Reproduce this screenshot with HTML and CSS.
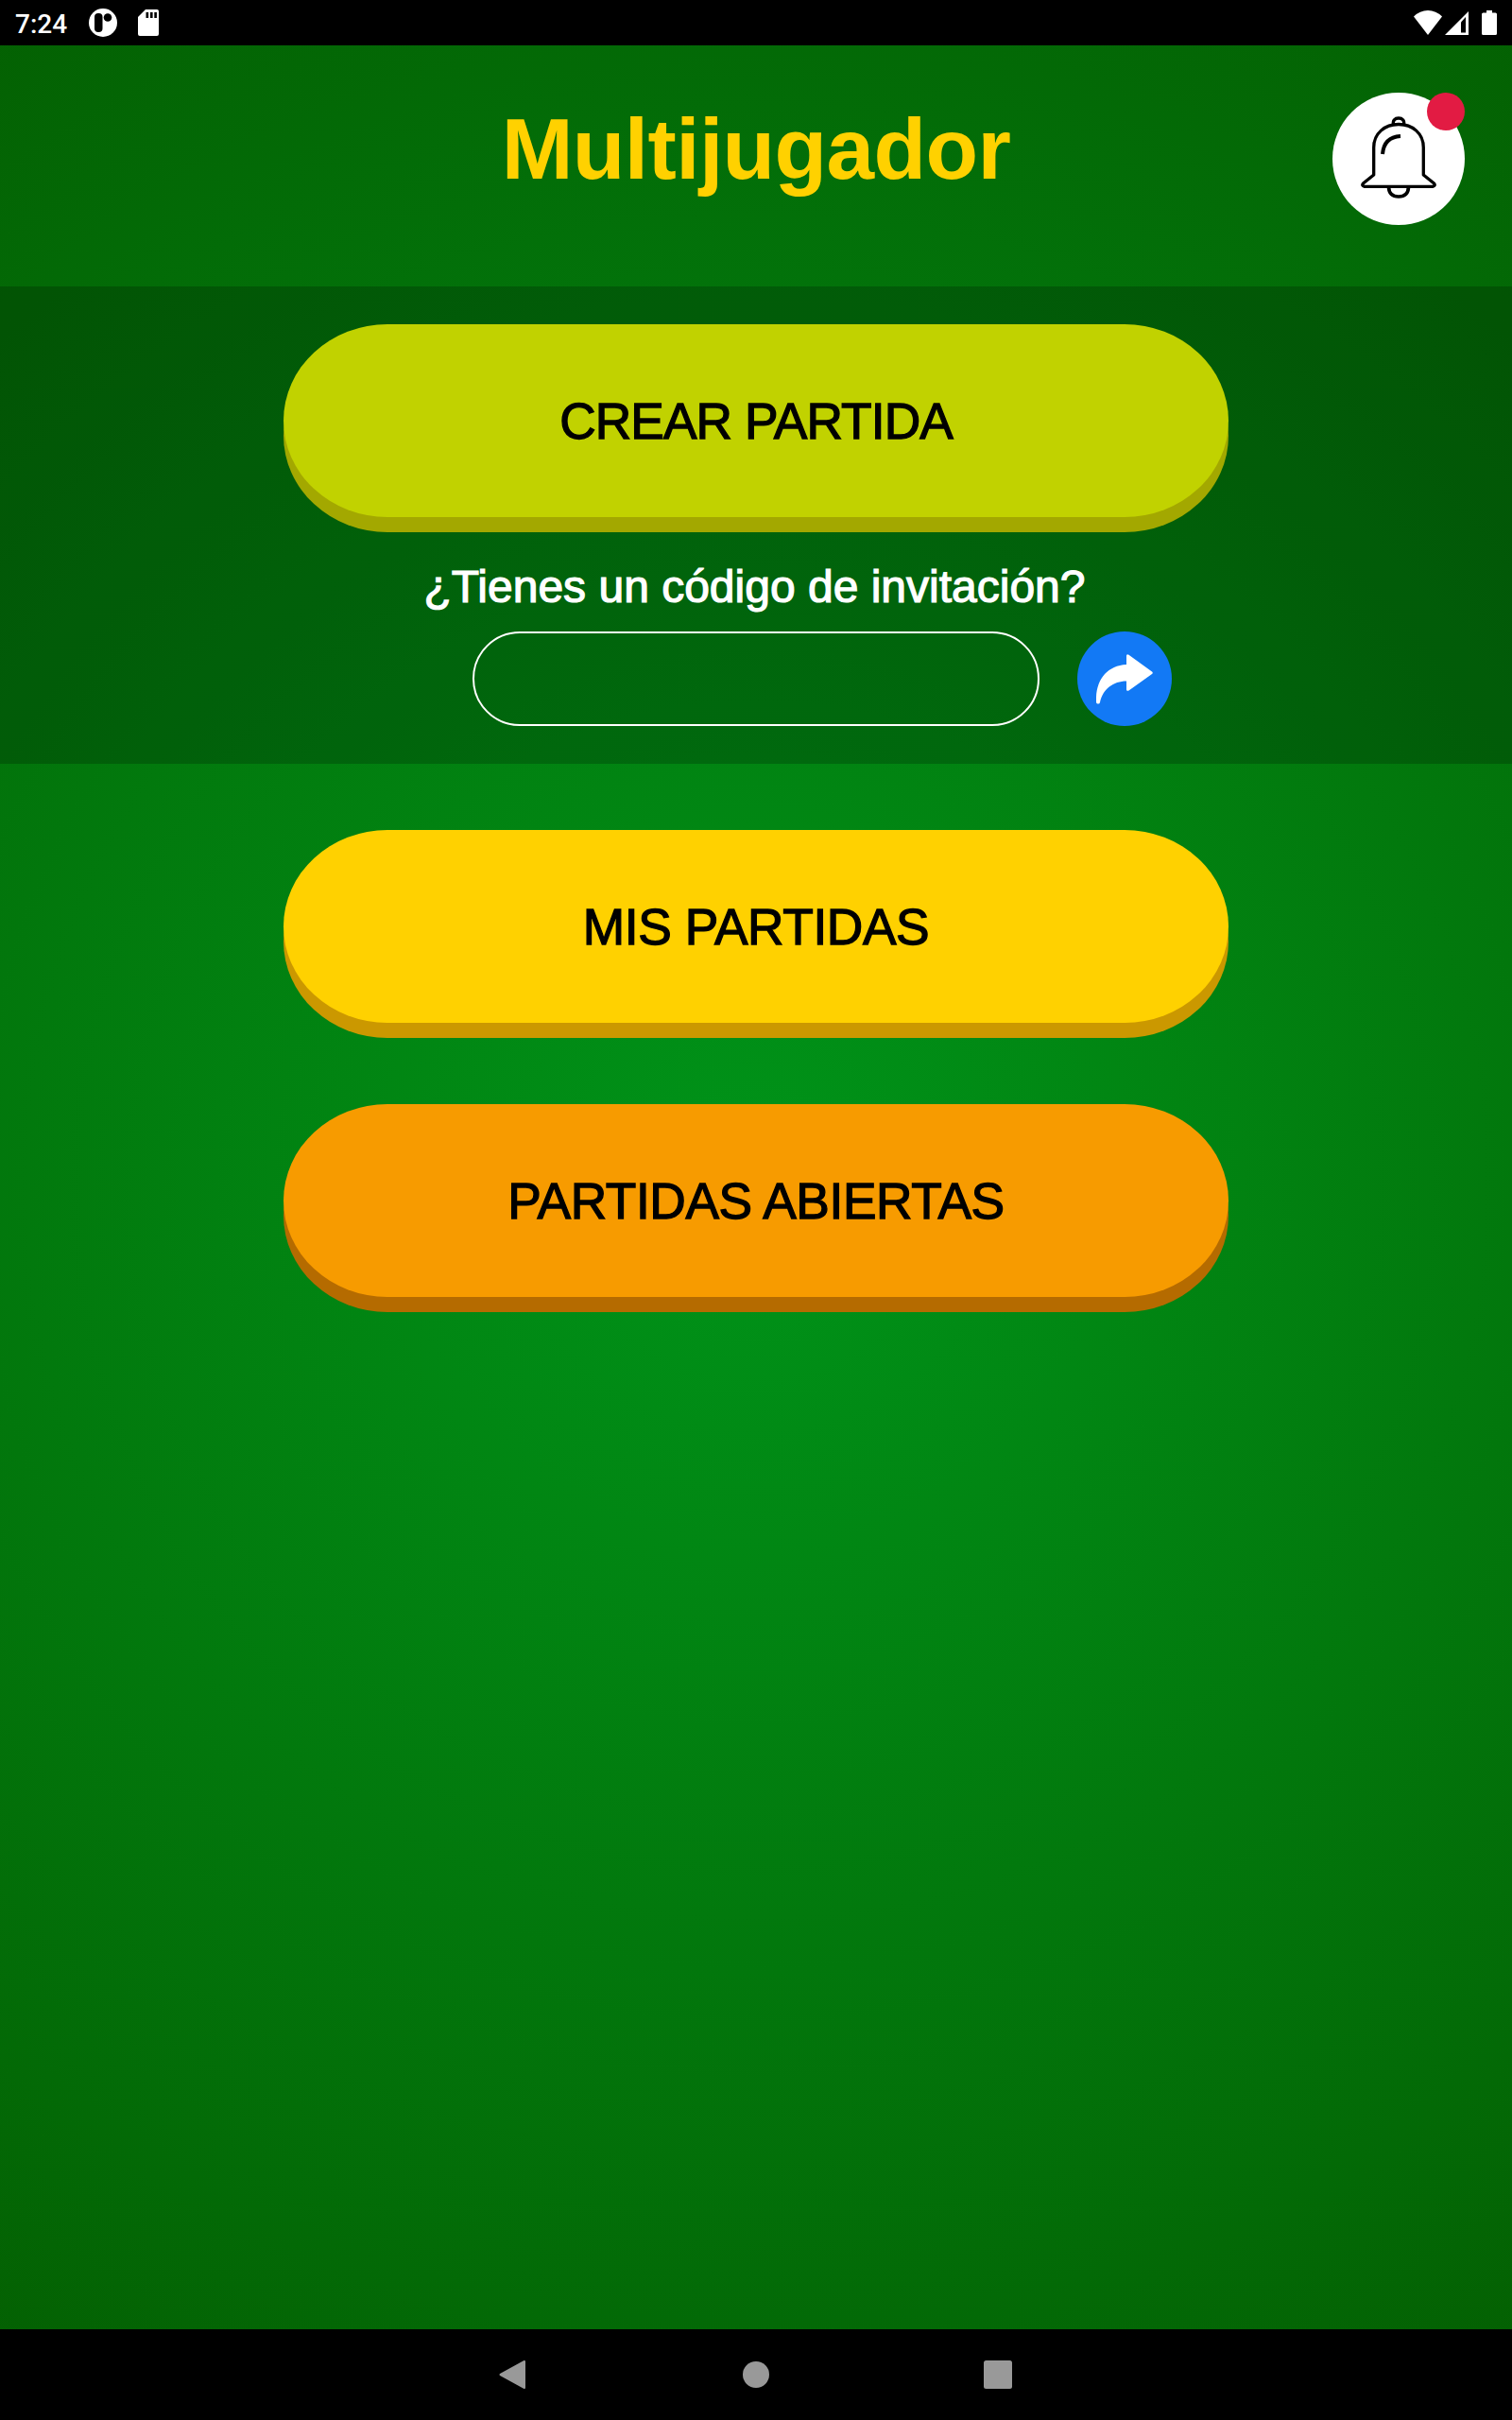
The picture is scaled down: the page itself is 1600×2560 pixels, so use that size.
FILE: index.html
```
<!DOCTYPE html>
<html lang="es">
<head>
    <meta charset="UTF-8">
    <meta name="viewport" content="width=device-width, initial-scale=1.0">
    <title>Multijugador</title>
    <link rel="stylesheet" href="styles.css">
</head>
<body>
    <div class="status-bar">
        <span class="time">7:24</span>
        <svg class="status-app" width="30" height="30" viewBox="0 0 30 30">
            <circle cx="15" cy="15" r="15" fill="#fff"/>
            <rect x="6" y="5" width="8.5" height="20" rx="4" fill="#000"/>
            <circle cx="20" cy="9.5" r="4.3" fill="#000"/>
        </svg>
        <svg class="status-sd" width="22" height="28" viewBox="0 0 22 28">
            <path d="M8 0h12a2 2 0 0 1 2 2v24a2 2 0 0 1-2 2H2a2 2 0 0 1-2-2V8z" fill="#fff"/>
            <path d="M8.5 3h2.6v6H8.500zM13 3h2.600v6H13zM17.300 3h2.600v6h-2.600z" fill="#000"/>
        </svg>
        <div class="status-right">
            <svg width="30" height="26" viewBox="0 0 30 26">
                <path d="M0 6.500Q6.500 0 15 0t15 6.500L15 26z" fill="#fff"/>
            </svg>
            <svg width="25" height="26" viewBox="0 0 25 26">
                <path d="M25 1v25H0z" fill="#fff"/>
                <path d="M17 12.500l5-5.500v16.500h-5z" fill="#000"/>
            </svg>
            <svg class="battery" width="16" height="26" viewBox="0 0 16 26">
                <path d="M5 0h6v2.500h3.500A1.500 1.500 0 0 1 16 4v20.500a1.500 1.500 0 0 1-1.500 1.500h-13A1.500 1.500 0 0 1 0 24.500V4a1.500 1.500 0 0 1 1.500-1.500H5z" fill="#fff"/>
            </svg>
        </div>
    </div>

    <main class="app">
        <header class="header">
            <h1>Multijugador</h1>
            <button class="bell-button">
                <svg width="80" height="88" viewBox="0 0 80 88" fill="none" stroke="#000" stroke-width="3.300" stroke-linejoin="round">
                    <path d="M13.700 63V34C13.700 19 25.500 9.500 40 9.500S66.300 19 66.300 34V63L77.500 72Q79.500 74.500 76 75.300H4Q0.500 74.500 2.500 72Z"/>
                    <path d="M34.500 10C33.500 5.500 36 3 40 3S46.500 5.500 45.500 10"/>
                    <path d="M29.500 76Q30 86 40 86T50.500 76" stroke-width="3.700"/>
                    <path d="M23 41Q24.500 23 42 22" stroke-width="4"/>
                </svg>
                <span class="bell-dot"></span>
            </button>
        </header>

        <section class="create-panel">
            <button class="button button-create">CREAR PARTIDA</button>
            <label class="code-label" for="codeInput">¿Tienes un código de invitación?</label>
            <div class="code-row">
                <input class="code-input" id="codeInput" type="text">
                <button class="send-button">
                    <svg width="60" height="53" viewBox="0 0 60 53">
                        <path d="M32 11V2Q32 -0.500 34.500 0.800L59 18.500Q60.500 19.700 59 21L34.500 38.500Q32 39.500 32 37.500V28.500C18 28.500 7 37 4 51Q3.500 53 1.500 52.500Q0 52.500 0 50.500C-1 28 11 12 32 11Z" fill="#fff"/>
                    </svg>
                </button>
            </div>
        </section>

        <section class="games">
            <button class="button button-mine">MIS PARTIDAS</button>
            <button class="button button-open">PARTIDAS ABIERTAS</button>
        </section>
    </main>

    <div class="nav-bar">
        <svg width="32" height="32" viewBox="0 0 32 32">
            <path d="M27 2v28L1.500 16z" fill="#999" stroke="#999" stroke-width="2" stroke-linejoin="round"/>
        </svg>
        <svg width="32" height="32" viewBox="0 0 32 32">
            <circle cx="16" cy="16" r="14" fill="#999"/>
        </svg>
        <svg width="32" height="32" viewBox="0 0 32 32">
            <rect x="1" y="1" width="30" height="30" rx="2.500" fill="#999"/>
        </svg>
    </div>
</body>
</html>
```
FILE: styles.css
```
* {
    box-sizing: border-box;
}
body {
    margin: 0;
    height: 2560px;
    display: flex;
    flex-direction: column;
    background-color: #000;
    font-family: "Liberation Sans", Arial, sans-serif;
}
svg {
    display: block;
}
button {
    border: none;
    padding: 0;
    font-family: inherit;
    cursor: pointer;
}
.status-bar {
    height: 48px;
    padding: 0 16px;
    display: flex;
    align-items: center;
    color: #fff;
}
.time {
    width: 78px;
    padding-top: 2px;
    font-family: Roboto, sans-serif;
    font-size: 28px;
    font-weight: 500;
}
.status-sd {
    margin-left: 22px;
}
.status-right {
    display: flex;
    gap: 3px;
    margin-left: auto;
}
.battery {
    margin-left: 11px;
}
.app {
    flex: 1;
    background: radial-gradient(circle 1600px, #009419, #045c00);
}
.header {
    position: relative;
    height: 255px;
    text-align: center;
}
.header h1 {
    margin: 0;
    padding-top: 58px;
    font-size: 91px;
    line-height: 104px;
    letter-spacing: -0.6px;
    color: #ffd100;
}
.bell-button {
    position: absolute;
    top: 50px;
    right: 50px;
    width: 140px;
    height: 140px;
    padding-bottom: 4px;
    display: flex;
    align-items: center;
    justify-content: center;
    border-radius: 50%;
    background-color: #fff;
}
.bell-dot {
    position: absolute;
    top: 0;
    right: 0;
    width: 40px;
    height: 40px;
    border-radius: 50%;
    background-color: #e21b43;
}
.create-panel {
    height: 505px;
    padding: 40px 0;
    display: flex;
    flex-direction: column;
    align-items: center;
    background-color: rgba(0, 0, 0, 0.2);
}
.button {
    width: 1000px;
    height: 204px;
    margin-bottom: 16px;
    border-radius: 110px / 102px;
    font-size: 53.3px;
    letter-spacing: -0.4px;
    color: #000;
    -webkit-text-stroke: 1.3px #000;
}
.button-create {
    background-color: #c1d200;
    box-shadow: 0 16px #a3a800;
    letter-spacing: -0.9px;
}
.button-mine {
    background-color: #ffd100;
    box-shadow: 0 16px #cb9800;
}
.button-open {
    background-color: #f79b00;
    box-shadow: 0 16px #b56b00;
}
.code-label {
    height: 105px;
    margin-right: 3px;
    line-height: 116px;
    font-size: 48px;
    color: #fff;
    -webkit-text-stroke: 1.2px #fff;
}
.code-row {
    display: grid;
    grid-template-columns: 600px 100px;
    gap: 40px;
    margin-left: 140px;
}
.code-input {
    height: 100px;
    padding: 0 40px;
    border: 2px solid #fff;
    border-radius: 50px;
    background: transparent;
    font-size: 48px;
    color: #fff;
}
.send-button {
    height: 100px;
    display: flex;
    align-items: center;
    justify-content: center;
    border-radius: 50%;
    background-color: #1279f5;
}
.games {
    padding-top: 70px;
    display: flex;
    flex-direction: column;
    align-items: center;
    gap: 70px;
}
.nav-bar {
    height: 96px;
    display: flex;
    align-items: center;
    justify-content: center;
    gap: 224px;
}
```
